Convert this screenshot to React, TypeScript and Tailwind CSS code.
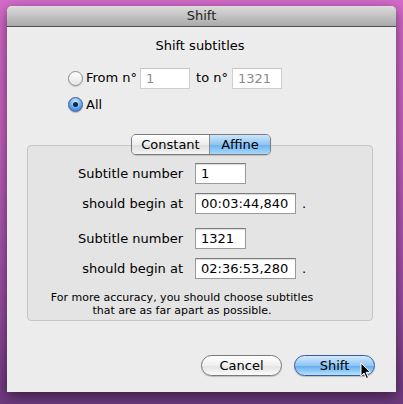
import React from "react";

const font = { fontFamily: '"Lucida Grande", "DejaVu Sans", sans-serif' };

function Field({ value, w, dim }: { value: string; w: string; dim?: boolean }) {
  return (
    <div
      className={`${w} h-[21px] border border-[#9a9a9a] border-t-[#7c7c7c] bg-white pl-[5px] text-[13px] leading-[19px] shadow-[inset_0_1px_1px_rgba(0,0,0,0.15)] ${
        dim ? "text-[#8c8c8c] border-[#cfcfcf] border-t-[#c4c4c4] shadow-none" : "text-black"
      }`}
    >
      {value}
    </div>
  );
}

function Radio({ on }: { on?: boolean }) {
  return on ? (
    <span className="flex h-[15px] w-[15px] items-center justify-center rounded-full border border-[#3a5d9c] bg-[radial-gradient(circle_at_50%_30%,#d3ecff,#5aa0e8_60%,#2f74d0)] shadow-[0_1px_1px_rgba(0,0,0,0.2)]">
      <span className="h-[5px] w-[5px] rounded-full bg-[#102a4c]" />
    </span>
  ) : (
    <span className="h-[15px] w-[15px] rounded-full border border-[#8c8c8c] bg-[linear-gradient(#fdfdfd,#e6e6e6)] shadow-[0_1px_1px_rgba(0,0,0,0.15)]" />
  );
}

function Row({ label, value, w, dot }: { label: string; value: string; w: string; dot?: boolean }) {
  return (
    <div className="flex items-center">
      <div className="w-[167px] pr-[12px] text-right text-[13px]">{label}</div>
      <Field value={value} w={w} />
      {dot && <span className="ml-[6px] text-[13px]">.</span>}
    </div>
  );
}

export default function App() {
  return (
    <div
      className="h-[404px] w-[403px] overflow-hidden bg-[linear-gradient(180deg,#d66ccc_0%,#c561bf_35%,#9a4ea4_75%,#6d3a7e_100%)] pt-[6px] pl-[7px]"
      style={font}
    >
      <div className="flex h-[386px] w-[389px] flex-col overflow-hidden rounded-t-[5px] bg-[#ececec] shadow-[0_4px_14px_rgba(0,0,0,0.55)]">
        {/* title bar */}
        <div className="flex h-[21px] items-center justify-center border-b border-[#4f4f4f] bg-[linear-gradient(#dcdcdc,#a9a9a9)] text-[13px] text-[#222]">
          Shift
        </div>

        <div className="flex flex-1 flex-col pl-[20px] pr-[23px]">
          <div className="mt-[9px] text-center text-[13px]">Shift subtitles</div>

          {/* range */}
          <div className="mt-[12px] ml-[41px] flex items-center">
            <Radio />
            <span className="ml-[3px] mr-[3px] text-[13px]">From n°</span>
            <Field value="1" w="w-[50px]" dim />
            <span className="ml-[6px] mr-[4px] text-[13px]">to n°</span>
            <Field value="1321" w="w-[50px]" dim />
          </div>
          <div className="mt-[6px] ml-[41px] flex items-center">
            <Radio on />
            <span className="ml-[3px] text-[13px]">All</span>
          </div>

          {/* tab box */}
          <div className="relative mt-[31px] h-[176px] rounded-[4px] border border-[#c6c6c6] bg-[#e4e4e4]">
            <div className="absolute top-[-12px] left-[103px] flex h-[21px] overflow-hidden rounded-[5px] border border-[#7b7b7b] text-[13px] shadow-[0_1px_1px_rgba(0,0,0,0.15)]">
              <div className="flex w-[78px] items-center justify-center border-r border-[#8a8a8a] bg-[linear-gradient(#ffffff,#ececec_50%,#dcdcdc_51%,#f4f4f4)]">
                Constant
              </div>
              <div className="flex w-[60px] items-center justify-center bg-[linear-gradient(#cde6fb,#8fc5f3_50%,#6cb1ef_51%,#a7dafc)]">
                Affine
              </div>
            </div>

            <div className="mt-[17px] flex flex-col gap-[9px]">
              <Row label="Subtitle number" value="1" w="w-[51px]" />
              <Row label="should begin at" value="00:03:44,840" w="w-[101px]" dot />
              <div className="mt-[5px]">
                <Row label="Subtitle number" value="1321" w="w-[51px]" />
              </div>
              <Row label="should begin at" value="02:36:53,280" w="w-[101px]" dot />
            </div>

            <div className="mt-[12px] pr-[36px] text-center text-[11px] leading-[13px]">
              For more accuracy, you should choose subtitles
              <br />
              that are as far apart as possible.
            </div>
          </div>

          {/* buttons */}
          <div className="mt-[34px] -mr-[2px] flex justify-end gap-[12px]">
            <div className="flex h-[21px] w-[81px] items-center justify-center rounded-full border border-[#7a7a7a] bg-[linear-gradient(#ffffff,#f0f0f0_50%,#e2e2e2_51%,#fbfbfb)] text-[13px] shadow-[0_1px_1px_rgba(0,0,0,0.2)]">
              Cancel
            </div>
            <div className="relative flex h-[21px] w-[81px] items-center justify-center rounded-full border border-[#3c5a9a] bg-[linear-gradient(#d2eafd,#8fc6f5_50%,#62abee_51%,#b4e2fd)] text-[13px] shadow-[0_1px_1px_rgba(0,0,0,0.2)]">
              Shift
              <svg className="absolute top-[6px] left-[65px]" width="12" height="18" viewBox="0 0 12 18">
                <path d="M1 1 L1 14 L4 11 L6.5 16.5 L8.5 15.6 L6 10.3 L10.5 10.3 Z" fill="#000" stroke="#fff" strokeWidth="1" strokeLinejoin="round" />
              </svg>
            </div>
          </div>
        </div>
      </div>
    </div>
  );
}
